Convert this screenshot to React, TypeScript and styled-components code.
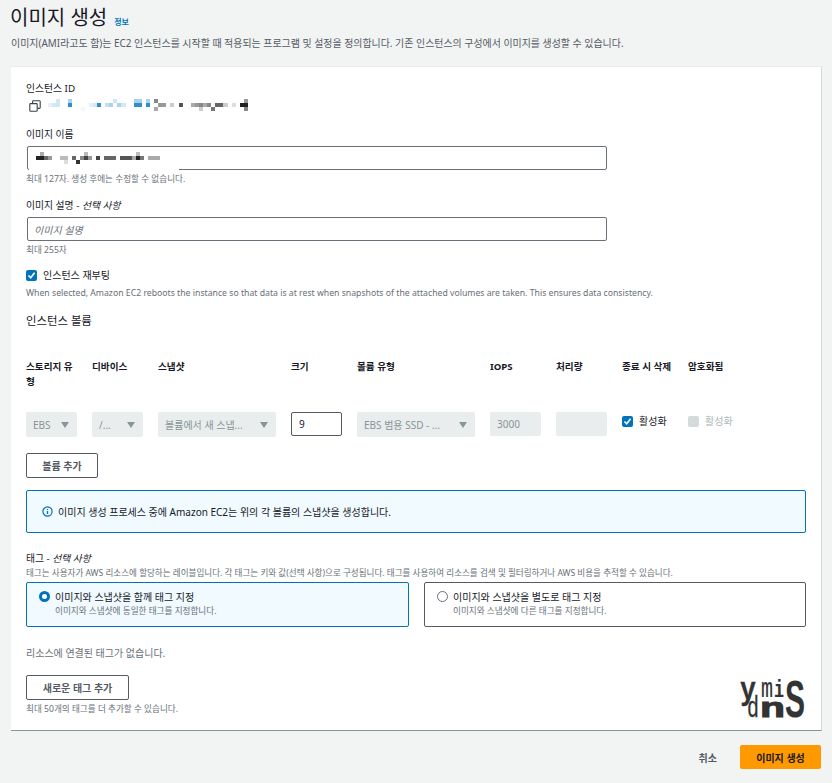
import React from 'react'
import styled, { createGlobalStyle } from 'styled-components'

const GlobalStyle = createGlobalStyle`
  html, body { margin: 0; padding: 0; background: #f2f3f3; }
  body {
    font-family: "Noto Sans", "Noto Sans CJK KR", sans-serif;
    color: #16191f;
    font-size: 10px;
    -webkit-font-smoothing: antialiased;
  }
`

const Page = styled.div`
  width: 832px;
  height: 783px;
  overflow: hidden;
  padding: 0 10px 0 11px;
  box-sizing: border-box;
`

const Header = styled.header`
  height: 66px;
  padding-top: 3px;
  box-sizing: border-box;
`

const TitleRow = styled.div`
  display: flex;
  align-items: flex-end;
  gap: 7px;
  height: 30px;
`

const Title = styled.h1`
  margin: 0 0 0 -1px;
  font-size: 20px;
  line-height: 30px;
  font-weight: 400;
`

const InfoLink = styled.a`
  color: #0073bb;
  font-size: 8px;
  font-weight: 700;
  line-height: 10px;
  margin-bottom: 6px;
`

const Lead = styled.p`
  margin: 3px 0 0;
  font-size: 9.95px;
  line-height: 14px;
  color: #545b64;
`

const Card = styled.section`
  position: relative;
  height: 665px;
  box-sizing: border-box;
  background: #fff;
  padding: 15px 15px 0;
  border-top: 1px solid #eaeded;
  border-right: 1px solid #d5dbdb;
  border-bottom: 1px solid #879596;
`

const Label = styled.div`
  font-size: 9.8px;
  line-height: 14px;

  i { font-style: italic; }
`

const IdRow = styled.div`
  display: flex;
  align-items: center;
  height: 15px;
  margin-top: 2px;
  gap: 7px;
  padding-left: 3px;
`

const Field = styled.div<{ $top: number }>`
  margin-top: ${(p) => p.$top}px;
`

const InputBox = styled.div`
  position: relative;
  width: 580px;
  height: 24px;
  margin: 4px 0 0 1px;
  box-sizing: border-box;
  border: 1px solid #687078;
  border-radius: 2px;
  background: #fff;
  padding: 0 6px;
  display: flex;
  align-items: center;
  font-size: 10px;
`

const Placeholder = styled.span`
  font-style: italic;
  color: #687078;
`

const Hint = styled.div<{ $top?: number; $size?: number }>`
  font-size: ${(p) => p.$size ?? 8.6}px;
  line-height: 12px;
  margin-top: ${(p) => p.$top ?? 3}px;
  color: #687078;
`

const MaskBar = styled.div`
  position: absolute;
  left: 1px;
  bottom: -1px;
  width: 150px;
  height: 1px;
  background: #fff;
`

const CheckRow = styled.div`
  display: flex;
  align-items: center;
  gap: 6px;
  font-size: 10px;
  line-height: 14px;
`

const Box = styled.span<{ $on?: boolean }>`
  width: 11px;
  height: 11px;
  flex: none;
  border-radius: 2px;
  background: ${(p) => (p.$on ? '#0073bb' : '#d5dbdb')};
  display: inline-flex;
  align-items: center;
  justify-content: center;

  svg { display: block; }
`

const SectionTitle = styled.h2`
  margin: 14px 0 0;
  font-size: 11.4px;
  line-height: 16px;
  font-weight: 400;
`

const VolumeGrid = styled.div`
  display: grid;
  grid-template-columns: 51px 51px 118px 51px 118px 51px 51px 51px 51px;
  column-gap: 15px;
  margin-top: 30px;
`

const Head = styled.div`
  font-size: 9.6px;
  line-height: 15px;
  font-weight: 700;
  height: 53px;
  word-break: break-all;
`

const SelectBox = styled.div`
  height: 25px;
  box-sizing: border-box;
  border-radius: 2px;
  background: #eaeded;
  color: #879596;
  font-size: 10px;
  padding: 0 7px;
  display: flex;
  align-items: center;
  justify-content: space-between;
  white-space: nowrap;
`

const Caret = styled.span`
  width: 0;
  height: 0;
  flex: none;
  margin-right: 1px;
  border-left: 4px solid transparent;
  border-right: 4px solid transparent;
  border-top: 6px solid #879596;
`

const SizeInput = styled.div`
  height: 24px;
  box-sizing: border-box;
  border: 1px solid #545b64;
  border-radius: 2px;
  padding: 0 7px;
  display: flex;
  align-items: center;
  font-size: 10px;
`

const ReadOnly = styled.div`
  height: 24px;
  box-sizing: border-box;
  border-radius: 2px;
  background: #eaeded;
  color: #879596;
  padding: 0 7px;
  display: flex;
  align-items: center;
  font-size: 10px;
`

const CellCheck = styled(CheckRow)<{ $muted?: boolean }>`
  height: 16px;
  margin-top: 1px;
  color: ${(p) => (p.$muted ? '#aab7b8' : '#16191f')};
`

const OutlineButton = styled.button<{ $w: number }>`
  display: block;
  width: ${(p) => p.$w}px;
  height: 25px;
  box-sizing: border-box;
  border: 1px solid #545b64;
  border-radius: 2px;
  background: #fff;
  color: #545b64;
  font: 700 10px "Noto Sans", "Noto Sans CJK KR", sans-serif;
  padding: 0;
`

const InfoBox = styled.div`
  margin-top: 12px;
  width: 780px;
  height: 43px;
  box-sizing: border-box;
  border: 1px solid #0073bb;
  border-radius: 2px;
  background: #f1faff;
  padding: 0 15px;
  display: flex;
  align-items: center;
  gap: 5px;
  font-size: 10px;
`

const Tiles = styled.div`
  display: grid;
  grid-template-columns: 383px 382px;
  column-gap: 15px;
  margin-top: 3px;
`

const Tile = styled.div<{ $on?: boolean }>`
  height: 45px;
  box-sizing: border-box;
  border: 1px solid ${(p) => (p.$on ? '#0073bb' : '#545b64')};
  border-radius: 2px;
  background: ${(p) => (p.$on ? '#f1faff' : '#fff')};
  padding: 7px 12px 0;
  display: flex;
  gap: 5px;
`

const Radio = styled.span<{ $on?: boolean }>`
  width: 11px;
  height: 11px;
  flex: none;
  margin-top: 1px;
  box-sizing: border-box;
  border-radius: 50%;
  background: #fff;
  border: ${(p) => (p.$on ? '3px solid #0073bb' : '1px solid #687078')};
`

const TileTitle = styled.div`
  font-size: 10px;
  line-height: 14px;
`

const TileSub = styled.div`
  font-size: 8.6px;
  line-height: 14px;
  color: #687078;
`

const Empty = styled.div`
  font-size: 10px;
  line-height: 14px;
  color: #687078;
  margin-top: 19px;
`

const Logo = styled.svg`
  position: absolute;
  right: 15px;
  bottom: 12px;
  overflow: visible;
`

const Footer = styled.footer`
  display: flex;
  justify-content: flex-end;
  align-items: center;
  height: 24px;
  margin-top: 14px;
  padding-right: 1px;
  gap: 23px;
`

const Cancel = styled.span`
  font-size: 10px;
  font-weight: 700;
  color: #545b64;
`

const Primary = styled.button`
  width: 81px;
  height: 24px;
  border: none;
  border-radius: 2px;
  background: #ff9900;
  color: #16191f;
  font: 700 10px "Noto Sans", "Noto Sans CJK KR", sans-serif;
  padding: 0;
`

const MosaicSvg = styled.svg<{ $left?: number }>`
  display: block;
  margin-left: ${(p) => p.$left ?? 0}px;
`

type Cell = [number, number, number, string]

const Check = () => (
  <svg width="9" height="9" viewBox="0 0 9 9">
    <path d="M1.5 4.5 L3.7 6.8 L7.6 1.8" fill="none" stroke="#fff" strokeWidth="1.6" />
  </svg>
)

const CopyIcon = () => (
  <svg width="12" height="12" viewBox="0 0 12 12" fill="none" stroke="#3b424c" strokeWidth="1.1">
    <rect x="0.8" y="3.6" width="7.4" height="7.6" rx="0.8" />
    <path d="M3.6 3.4V1.6a.8.8 0 0 1 .8-.8h6a.8.8 0 0 1 .8.8v6a.8.8 0 0 1-.8.8H8.4" />
  </svg>
)

const Mosaic = ({ cells, w, h, vw, left }: { cells: Cell[]; w: number; h: number; vw?: number; left?: number }) => (
  <MosaicSvg $left={left} width={w} height={h} viewBox={`0 0 ${vw ?? w} ${h}`} preserveAspectRatio="none" shapeRendering="crispEdges">
    {cells.map(([x, y, cw, c], i) => (
      <rect key={i} x={x} y={y} width={cw} height={4} fill={c} />
    ))}
  </MosaicSvg>
)

const idCells: Cell[] = [
  [0, 4, 4, '#e4f1fa'], [4, 4, 4, '#d3e8f6'], [8, 0, 4, '#d3e8f6'], [8, 4, 4, '#cfe5f5'], [20, 4, 4, '#2e8fcf'], [20, 0, 4, '#a9d2ec'],
  [32, 8, 4, '#f2f8fc'], [40, 4, 4, '#e4f1fa'], [44, 4, 4, '#d3e8f6'], [48, 4, 4, '#2e8fcf'], [56, 4, 4, '#c4dff2'], [60, 4, 4, '#a9d2ec'],
  [64, 0, 4, '#cfe5f5'], [68, 4, 4, '#a9d2ec'], [72, 4, 4, '#d3e8f6'], [84, 0, 4, '#a9d2ec'], [84, 4, 4, '#2e8fcf'], [88, 0, 4, '#a9d2ec'], [88, 4, 4, '#2e8fcf'],
  [96, 0, 4, '#a9d2ec'], [96, 4, 4, '#2e8fcf'], [104, 0, 4, '#888'], [104, 8, 4, '#aaa'], [108, 4, 8, '#999'], [120, 4, 4, '#ccc'], [128, 4, 4, '#555'],
  [140, 4, 4, '#aaa'], [144, 4, 4, '#999'], [148, 4, 4, '#888'], [148, 8, 4, '#ccc'], [152, 4, 4, '#aaa'], [156, 4, 4, '#888'], [160, 8, 4, '#777'], [164, 4, 8, '#666'], [172, 4, 4, '#ccc'], [180, 4, 4, '#ddd'],
  [192, 0, 4, '#999'], [188, 4, 4, '#222'], [192, 4, 4, '#222'], [192, 8, 4, '#888']
]

const nameCells: Cell[] = [
  [0, 4, 8, '#222'], [8, 4, 4, '#666'], [12, 4, 4, '#999'], [4, 0, 4, '#aaa'], [24, 4, 8, '#bbb'], [28, 8, 4, '#ddd'], [36, 4, 4, '#666'], [40, 8, 4, '#333'], [44, 4, 4, '#888'], [48, 4, 4, '#444'], [48, 0, 4, '#bbb'], [52, 4, 4, '#999'],
  [60, 4, 4, '#444'], [68, 4, 12, '#666'], [84, 4, 12, '#555'], [96, 4, 4, '#aaa'], [100, 4, 4, '#222'], [100, 0, 4, '#bbb'], [104, 4, 4, '#777'], [112, 4, 12, '#aaa']
]

export default function App() {
  return (
    <Page>
      <GlobalStyle />
      <Header>
        <TitleRow>
          <Title>이미지 생성</Title>
          <InfoLink>정보</InfoLink>
        </TitleRow>
        <Lead>이미지(AMI라고도 함)는 EC2 인스턴스를 시작할 때 적용되는 프로그램 및 설정을 정의합니다. 기존 인스턴스의 구성에서 이미지를 생성할 수 있습니다.</Lead>
      </Header>
      <Card>
        <Label>인스턴스 ID</Label>
        <IdRow>
          <CopyIcon />
          <Mosaic cells={idCells} w={204} vw={200} h={13} />
        </IdRow>
        <Field $top={15}>
          <Label>이미지 이름</Label>
          <InputBox>
            <Mosaic cells={nameCells} w={130} h={12} left={2} />
            <MaskBar />
          </InputBox>
          <Hint>최대 127자. 생성 후에는 수정할 수 없습니다.</Hint>
        </Field>
        <Field $top={14}>
          <Label>이미지 설명 - <i>선택 사항</i></Label>
          <InputBox>
            <Placeholder>이미지 설명</Placeholder>
          </InputBox>
          <Hint>최대 255자</Hint>
        </Field>
        <Field $top={12}>
          <CheckRow>
            <Box $on><Check /></Box>
            인스턴스 재부팅
          </CheckRow>
          <Hint $top={5} $size={8.7}>When selected, Amazon EC2 reboots the instance so that data is at rest when snapshots of the attached volumes are taken. This ensures data consistency.</Hint>
        </Field>
        <SectionTitle>인스턴스 볼륨</SectionTitle>
        <VolumeGrid>
          <Head>스토리지 유형</Head>
          <Head>디바이스</Head>
          <Head>스냅샷</Head>
          <Head>크기</Head>
          <Head>볼륨 유형</Head>
          <Head>IOPS</Head>
          <Head>처리량</Head>
          <Head>종료 시 삭제</Head>
          <Head>암호화됨</Head>
          <SelectBox>EBS<Caret /></SelectBox>
          <SelectBox>/...<Caret /></SelectBox>
          <SelectBox>볼륨에서 새 스냅...<Caret /></SelectBox>
          <SizeInput>9</SizeInput>
          <SelectBox>EBS 범용 SSD - ...<Caret /></SelectBox>
          <ReadOnly>3000</ReadOnly>
          <ReadOnly />
          <CellCheck><Box $on><Check /></Box>활성화</CellCheck>
          <CellCheck $muted><Box />활성화</CellCheck>
        </VolumeGrid>
        <Field $top={16}>
          <OutlineButton $w={72}>볼륨 추가</OutlineButton>
        </Field>
        <InfoBox>
          <svg width="11" height="11" viewBox="0 0 11 11">
            <circle cx="5.5" cy="5.5" r="4.6" fill="none" stroke="#0073bb" strokeWidth="1.2" />
            <path d="M5.5 3v1M5.5 5v3" stroke="#0073bb" strokeWidth="1.3" />
          </svg>
          이미지 생성 프로세스 중에 Amazon EC2는 위의 각 볼륨의 스냅샷을 생성합니다.
        </InfoBox>
        <Field $top={19}>
          <Label>태그 - <i>선택 사항</i></Label>
          <Hint $top={1} $size={8.55}>태그는 사용자가 AWS 리소스에 할당하는 레이블입니다. 각 태그는 키와 값(선택 사항)으로 구성됩니다. 태그를 사용하여 리소스를 검색 및 필터링하거나 AWS 비용을 추적할 수 있습니다.</Hint>
        </Field>
        <Tiles>
          <Tile $on>
            <Radio $on />
            <div>
              <TileTitle>이미지와 스냅샷을 함께 태그 지정</TileTitle>
              <TileSub>이미지와 스냅샷에 동일한 태그를 지정합니다.</TileSub>
            </div>
          </Tile>
          <Tile>
            <Radio />
            <div>
              <TileTitle>이미지와 스냅샷을 별도로 태그 지정</TileTitle>
              <TileSub>이미지와 스냅샷에 다른 태그를 지정합니다.</TileSub>
            </div>
          </Tile>
        </Tiles>
        <Empty>리소스에 연결된 태그가 없습니다.</Empty>
        <Field $top={15}>
          <OutlineButton $w={103}>새로운 태그 추가</OutlineButton>
          <Hint>최대 50개의 태그를 더 추가할 수 있습니다.</Hint>
        </Field>
        <Logo width="66" height="38" viewBox="0 0 66 38" fill="#333" stroke="#333">
          <text x="0" y="19" fontFamily="Liberation Mono" fontWeight="700" fontSize="32" textLength="16" lengthAdjust="spacingAndGlyphs" strokeWidth="0.3">y</text>
          <text x="21" y="17" fontFamily="Liberation Mono" fontSize="28" textLength="12" lengthAdjust="spacingAndGlyphs" strokeWidth="0.2">m</text>
          <text x="34" y="17" fontFamily="Liberation Mono" fontWeight="700" fontSize="24" textLength="10" lengthAdjust="spacingAndGlyphs" strokeWidth="0.2">i</text>
          <text x="7" y="37" fontFamily="Liberation Mono" fontSize="30" textLength="12" lengthAdjust="spacingAndGlyphs" strokeWidth="0.3">d</text>
          <text x="20" y="37" fontFamily="Liberation Mono" fontWeight="700" fontSize="28" textLength="25" lengthAdjust="spacingAndGlyphs" strokeWidth="1">n</text>
          <text x="45" y="37" fontFamily="Liberation Sans" fontWeight="700" fontSize="52" textLength="20" lengthAdjust="spacingAndGlyphs" strokeWidth="0.2">S</text>
        </Logo>
      </Card>
      <Footer>
        <Cancel>취소</Cancel>
        <Primary>이미지 생성</Primary>
      </Footer>
    </Page>
  )
}
